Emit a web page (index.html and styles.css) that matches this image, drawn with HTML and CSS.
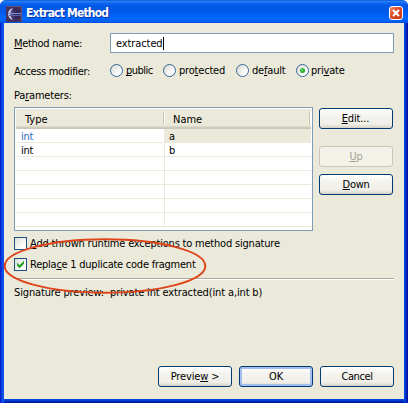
FILE: index.html
```html
<!DOCTYPE html>
<html lang="en">
<head>
<meta charset="utf-8">
<title>Extract Method</title>
<link rel="stylesheet" href="styles.css">
</head>
<body>
<div class="window">
  <header class="titlebar">
    <svg class="app-icon" width="16" height="16" viewBox="0 0 16 16">
      <defs><linearGradient id="ball" x1="0" x2="1"><stop offset="0" stop-color="#8984bd"/><stop offset=".4" stop-color="#393065"/><stop offset="1" stop-color="#302049"/></linearGradient></defs>
      <path fill="#43305d" d="M0 0h16v16H0z"/>
      <path fill="#685078" d="M0 0h16v1H0zM15 1h1v15h-1z"/>
      <circle cx="8.5" cy="8" r="6" fill="url(#ball)"/>
      <path d="M7 2C1 3 0 12 7 14C3 10 3 6 7 2" fill="#d5d4f0"/>
      <path d="M2 7.5h13" stroke="#8191d0"/><path d="M3 9.5h12" stroke="#5965a8"/>
    </svg>
    <h1 class="title">Extract Method</h1>
    <button class="close" aria-label="Close"><svg width="14" height="14" viewBox="0 0 14 14"><path d="M4 4l6 6M10 4l-6 6" stroke="#fff" stroke-width="2.2"/></svg></button>
  </header>
  <main class="content">
    <div class="field name-field">
      <label class="label w-name"><u>M</u>ethod name:</label>
      <div class="input"><span>extracted</span><i class="caret"></i></div>
    </div>
    <div class="field access-field">
      <span class="label w-access">Access modifier:</span>
      <div class="radios">
        <label class="choice public"><i class="radio"></i><span><u>p</u>ublic</span></label>
        <label class="choice protected"><i class="radio"></i><span>pro<u>t</u>ected</span></label>
        <label class="choice default"><i class="radio"></i><span>de<u>f</u>ault</span></label>
        <label class="choice private"><i class="radio on"></i><span>pri<u>v</u>ate</span></label>
      </div>
    </div>
    <div class="label params">Pa<u>r</u>ameters:</div>
    <div class="table-area">
      <div class="table">
        <div class="head"><span>Type</span><span>Name</span></div>
        <div class="row"><span class="current">int</span><span class="selected">a</span></div>
        <div class="row"><span>int</span><span>b</span></div>
        <div class="row"><span></span><span></span></div>
        <div class="row"><span></span><span></span></div>
        <div class="row"><span></span><span></span></div>
        <div class="row"><span></span><span></span></div>
        <div class="row"><span></span><span></span></div>
      </div>
      <div class="side">
        <button class="btn edit"><span><u>E</u>dit...</span></button>
        <button class="btn up" disabled><span><u>U</u>p</span></button>
        <button class="btn down"><span><u>D</u>own</span></button>
      </div>
    </div>
    <label class="check-row add"><i class="check"></i><span><u>A</u>dd thrown runtime exceptions to method signature</span></label>
    <label class="check-row replace"><i class="check"><svg width="11" height="11" viewBox="0 0 11 11"><path d="M2 3.5l2.5 2.7L9 1.7v3L4.5 9.2L2 6.5z" fill="#21a121"/></svg></i><span>Repla<u>c</u>e 1 duplicate code fragment</span></label>
    <div class="preview">Signature preview:&nbsp; private int extracted(int a,int b)</div>
    <footer class="actions">
      <button class="btn pv"><span>Previe<u>w</u> &gt;</span></button>
      <button class="btn ok"><span>OK</span></button>
      <button class="btn cancel"><span>Cancel</span></button>
    </footer>
  </main>
  <svg class="annotation" width="204" height="58" viewBox="0 0 204 58"><ellipse cx="102" cy="29" rx="100.3" ry="26.7" fill="none" stroke="#df451a" stroke-width="2"/></svg>
</div>
</body>
</html>
```
FILE: styles.css
```css
* { box-sizing: border-box; }
body { margin: 0; background: #fff; }
.window {
  position: relative;
  width: 408px;
  height: 403px;
  padding: 0 4px 4px;
  border-radius: 6px 6px 0 0;
  overflow: hidden;
  background: linear-gradient(90deg, #0013c6 0, #0831d9 1px, #0855e8 3px, #0855e8 4px, transparent 4px, transparent 404px, #0650e8 404px, #003dd7 405px, #0019a9 407px), linear-gradient(#0855e8 399px, #0048e0 399px, #003dd7 401px, #001894 402px);
  font: 11px/14px "DejaVu Sans Condensed", "DejaVu Sans", sans-serif;
  font-stretch: condensed;
  color: #000;
}
u { text-decoration-thickness: 1px; text-underline-offset: 1px; text-decoration-skip-ink: none; }
span, .label { white-space: nowrap; }
.titlebar {
  display: flex;
  align-items: center;
  height: 23px;
  margin: 0 -4px;
  padding: 3px 5px 0 6px;
  background: linear-gradient(#0148cb 0, #2c83f5 1px, #0f69f4 3px, #0057e5 6px, #0058e9 12px, #0066fc 17px, #0066fc 20px, #004de0 23px);
}
.app-icon { flex: none; margin-top: 1px; }
.title {
  margin: 0 auto 0 4px;
  font: bold 12px/18px "DejaVu Sans Condensed", sans-serif;
  letter-spacing: -.8px;
  color: #fff;
  text-shadow: 1px 1px #0830a0;
}
.close {
  display: flex;
  width: 14px;
  height: 14px;
  padding: 0;
  border: 1px solid #fff;
  border-radius: 3px;
  background: linear-gradient(135deg, #ec8d70, #dc4821 45%, #c53712);
}
.close svg { flex: none; margin: -1px; }
.content { height: 376px; padding: 10px 10px 0; background: #ebe9d9; }
.field { display: flex; }
.name-field { height: 20px; }
.label { width: 96px; }
.w-name { padding-top: 4px; letter-spacing: -.3px; }
.w-access { padding-top: 1px; letter-spacing: -.32px; }
.input { display: flex; align-items: center; width: 284px; height: 20px; padding: 1px 0 0 5px; border: 1px solid #7f9db9; background: #fff; letter-spacing: -.1px; }
.caret { width: 1px; height: 13px; background: #000; }
.access-field { height: 14px; margin-top: 11px; }
.radios { display: flex; letter-spacing: -.2px; }
.choice { display: flex; gap: 3px; }
.public { width: 53px; letter-spacing: -.5px; }
.protected { width: 73px; }
.default { width: 60px; }
.private { gap: 2px; }
.radio { position: relative; flex: none; width: 13px; height: 13px; border: 1px solid #336698; border-radius: 50%; background: linear-gradient(135deg, #d9d8d0, #fff 75%); }
.on::after { content: ""; position: absolute; inset: 3px; border-radius: 50%; background: radial-gradient(circle at 40% 40%, #62d85e, #159315 80%); }
.params { margin-top: 11px; height: 18px; letter-spacing: -.2px; }
.table-area { display: flex; gap: 6px; height: 124px; }
.table { width: 299px; height: 124px; padding: 1px 1px; border: 1px solid #7f9db9; background: #fff; overflow: hidden; }
.head { display: grid; grid-template-columns: 148px 147px; height: 20px; padding-top: 3px; background: linear-gradient(#ebe9d9 17px, #e2dece 17px, #d6d2c2 18px, #cbc7b8 19px); }
.head span { height: 13px; padding-left: 9px; border-right: 1px solid #c7c5b2; box-shadow: 1px 0 #fff; line-height: 15px; }
.head span:last-child { margin-right: 1px; }
.row { display: grid; grid-template-columns: 149px 146px; height: 14px; border-bottom: 1px solid #ebe9d9; line-height: 15px; letter-spacing: -.3px; }
.row span { padding-left: 5px; border-right: 1px solid #ebe9d9; height: 14px; }
.row span:last-child { padding-left: 4px; border: 0; }
.row .current { color: #316ac5; }
.row .selected { background: #ebe9d9; }
.side { padding-top: 1px; width: 74px; }
.btn {
  display: flex;
  align-items: center;
  justify-content: center;
  width: 74px;
  height: 21px;
  padding: 0;
  border: 1px solid #003c74;
  border-radius: 3px;
  background: linear-gradient(#fff, #f4f3ee 35%, #f0efe8 80%, #d6d0c5);
  font: inherit;
  letter-spacing: -.15px;
  color: #000;
}
.up { margin-top: 17px; border-color: #c9c7ba; background: #f3f2e9; color: #a1a192; }
.down { margin-top: 7px; letter-spacing: -.3px; }
.edit { padding-right: 1px; }
.cancel { letter-spacing: -.4px; }
.check-row { display: flex; gap: 3px; height: 13px; line-height: 14px; letter-spacing: -.2px; }
.check { flex: none; width: 13px; height: 13px; border: 1px solid #1c5180; background: linear-gradient(135deg, #dcdcd7, #fff 75%); }
.check svg { display: block; }
.add { margin-top: 6px; }
.replace { margin-top: 8px; letter-spacing: -.24px; }
.preview { height: 21px; margin-top: 7px; width: 380px; padding-top: 7px; border-top: 1px solid #aca899; box-shadow: inset 0 1px #fff; white-space: nowrap; letter-spacing: -.14px; }
.actions { display: flex; gap: 7px; margin: 67px 0 0 144px; }
.ok { box-shadow: inset 0 0 0 2px #a3bdf0; }
.annotation { position: absolute; left: 3px; top: 237px; }
```
